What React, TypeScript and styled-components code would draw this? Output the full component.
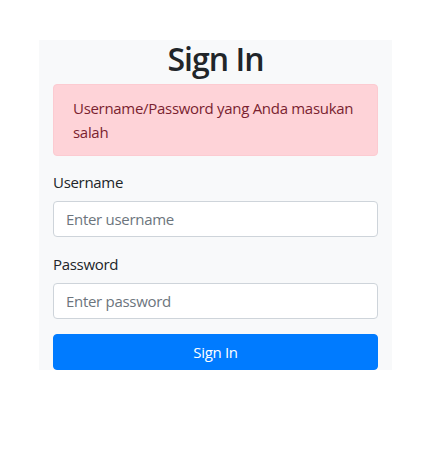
import React from "react";
import styled, { createGlobalStyle } from "styled-components";

const Global = createGlobalStyle`
  html, body { margin: 0; padding: 0; background: #ffffff; }
  body { font-family: "Open Sans", "Noto Sans", sans-serif; color: #212529; }
  * { box-sizing: border-box; }
`;

const Page = styled.div`
  padding: 40px 0 0 39px;
`;

const Card = styled.form`
  width: 353px;
  background: #f8f9fa;
  padding: 0 14px;
  display: flex;
  flex-direction: column;
`;

const Title = styled.h2`
  margin: 0 0 6px;
  font-size: 32px;
  line-height: 38px;
  font-weight: 600;
  letter-spacing: -1px;
  text-align: center;
  color: #212529;
`;

const Alert = styled.div`
  background: #fed3d8;
  border: 1px solid #fccbd1;
  border-radius: 4px;
  color: #7a1f30;
  padding: 11px 19px;
  font-size: 15px;
  line-height: 24px;
  letter-spacing: -0.3px;
  margin-bottom: 16px;
`;

const Group = styled.div<{ $last?: boolean }>`
  display: flex;
  flex-direction: column;
  margin-bottom: ${(p) => (p.$last ? "15px" : "17px")};
`;

const Label = styled.label`
  font-size: 15px;
  line-height: 21px;
  letter-spacing: -0.3px;
  margin-bottom: 8px;
  color: #212529;
`;

const Input = styled.input`
  height: 36px;
  border: 1px solid #ced4da;
  border-radius: 4px;
  background: #ffffff;
  padding: 0 12px;
  font-family: inherit;
  font-size: 15px;
  letter-spacing: -0.3px;
  color: #495057;
  outline: none;
  &::placeholder { color: #6c757d; }
`;

const Button = styled.button`
  height: 36px;
  border: 1px solid #007bff;
  border-radius: 4px;
  background: #007bff;
  color: #ffffff;
  font-family: inherit;
  font-size: 15px;
  letter-spacing: -0.3px;
  cursor: pointer;
`;

export default function App() {
  return (
    <Page>
      <Global />
      <Card onSubmit={(e) => e.preventDefault()}>
        <Title>Sign In</Title>
        <Alert>Username/Password yang Anda masukan salah</Alert>
        <Group>
          <Label htmlFor="u">Username</Label>
          <Input id="u" placeholder="Enter username" />
        </Group>
        <Group $last>
          <Label htmlFor="p">Password</Label>
          <Input id="p" type="password" placeholder="Enter password" />
        </Group>
        <Button type="submit">Sign In</Button>
      </Card>
    </Page>
  );
}
